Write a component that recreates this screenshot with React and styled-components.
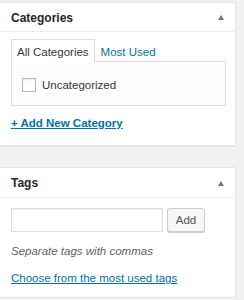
import styled, { createGlobalStyle } from 'styled-components'

const GlobalStyle = createGlobalStyle`
  * { box-sizing: border-box; }
  body {
    margin: 0;
    background: #f1f1f1;
    font-family: "Liberation Sans", Arial, sans-serif;
    font-size: 11.5px;
    color: #32373c;
  }
`

const Page = styled.div`
  padding-top: 2px;
  width: 236px;
  display: flex;
  flex-direction: column;
  gap: 21px;
`

const Panel = styled.section`
  background: #fff;
  border: 1px solid #e5e5e5;
  border-left: 0;
  box-shadow: 0 1px 1px rgba(0, 0, 0, 0.04);
`

const Header = styled.div`
  height: ${({tall}) => tall ? 30 : 29}px;
  border-bottom: 1px solid #eee;
  display: flex;
  align-items: center;
  justify-content: space-between;
  padding: 1px 10px 0 11px;
`

const Title = styled.h2`
  margin: 0;
  font-size: 12px;
  font-weight: bold;
  color: #23282d;
`

const Toggle = styled.span`
  width: 0;
  height: 0;
  border-left: 3.5px solid transparent;
  border-right: 3.5px solid transparent;
  border-bottom: 5px solid #72777c;
  margin-right: 1px;
`

const Body = styled.div`
  padding: ${({top}) => top}px 9px ${({bottom}) => bottom}px 11px;
`

const Tabs = styled.ul`
  list-style: none;
  margin: 0;
  padding: 0;
  display: flex;
  position: relative;
  z-index: 1;
`

const Tab = styled.li`
  height: 23px;
  display: flex;
  align-items: center;
  padding: 1px ${({active}) => active ? 5 : 8}px 0 5px;
  border: 1px solid ${({active}) => active ? '#ddd' : 'transparent'};
  border-bottom: 0;
  background: ${({active}) => active ? '#fff' : 'transparent'};
  color: ${({active}) => active ? '#32373c' : '#0073aa'};
`

const TabPanel = styled.div`
  height: 45px;
  margin-top: -1px;
  border: 1px solid #ddd;
  background: #fdfdfd;
  padding: 16px 10px 0;
`

const CheckRow = styled.label`
  display: flex;
  align-items: center;
  gap: 6px;
  color: #32373c;
`

const Box = styled.span`
  width: 14px;
  height: 14px;
  border: 1px solid #b4b9be;
  background: #fff;
  box-shadow: inset 0 1px 2px rgba(0, 0, 0, 0.1);
`

const Link = styled.a`
  display: block;
  line-height: 16px;
  margin-top: ${({gap}) => gap}px;
  color: #0073aa;
  text-decoration: underline;
  font-weight: ${({bold}) => bold ? 'bold' : 'normal'};
`

const AddRow = styled.div`
  display: flex;
  gap: 4px;
`

const Input = styled.input`
  width: 152px;
  height: 24px;
  border: 1px solid #ddd;
  box-shadow: inset 0 1px 2px rgba(0, 0, 0, 0.07);
  outline: none;
  font: inherit;
`

const Button = styled.button`
  width: 38px;
  height: 24px;
  border: 1px solid #ccc;
  border-radius: 3px;
  background: #f7f7f7;
  box-shadow: 0 1px 0 #ccc;
  color: #555;
  font: inherit;
  font-size: 11.5px;
  padding: 0;
`

const Help = styled.p`
  margin: 11px 0 0;
  line-height: 16px;
  font-style: italic;
  color: #5f5f5f;
`

export default function App() {
  return (
    <>
      <GlobalStyle />
      <Page>
        <Panel>
          <Header>
            <Title>Categories</Title>
            <Toggle />
          </Header>
          <Body top={7} bottom={14}>
            <Tabs>
              <Tab active>All Categories</Tab>
              <Tab>Most Used</Tab>
            </Tabs>
            <TabPanel>
              <CheckRow>
                <Box />
                Uncategorized
              </CheckRow>
            </TabPanel>
            <Link bold gap={9}>+ Add New Category</Link>
          </Body>
        </Panel>
        <Panel>
          <Header tall>
            <Title>Tags</Title>
            <Toggle />
          </Header>
          <Body top={10} bottom={11}>
            <AddRow>
              <Input />
              <Button>Add</Button>
            </AddRow>
            <Help>Separate tags with commas</Help>
            <Link gap={11}>Choose from the most used tags</Link>
          </Body>
        </Panel>
      </Page>
    </>
  )
}
